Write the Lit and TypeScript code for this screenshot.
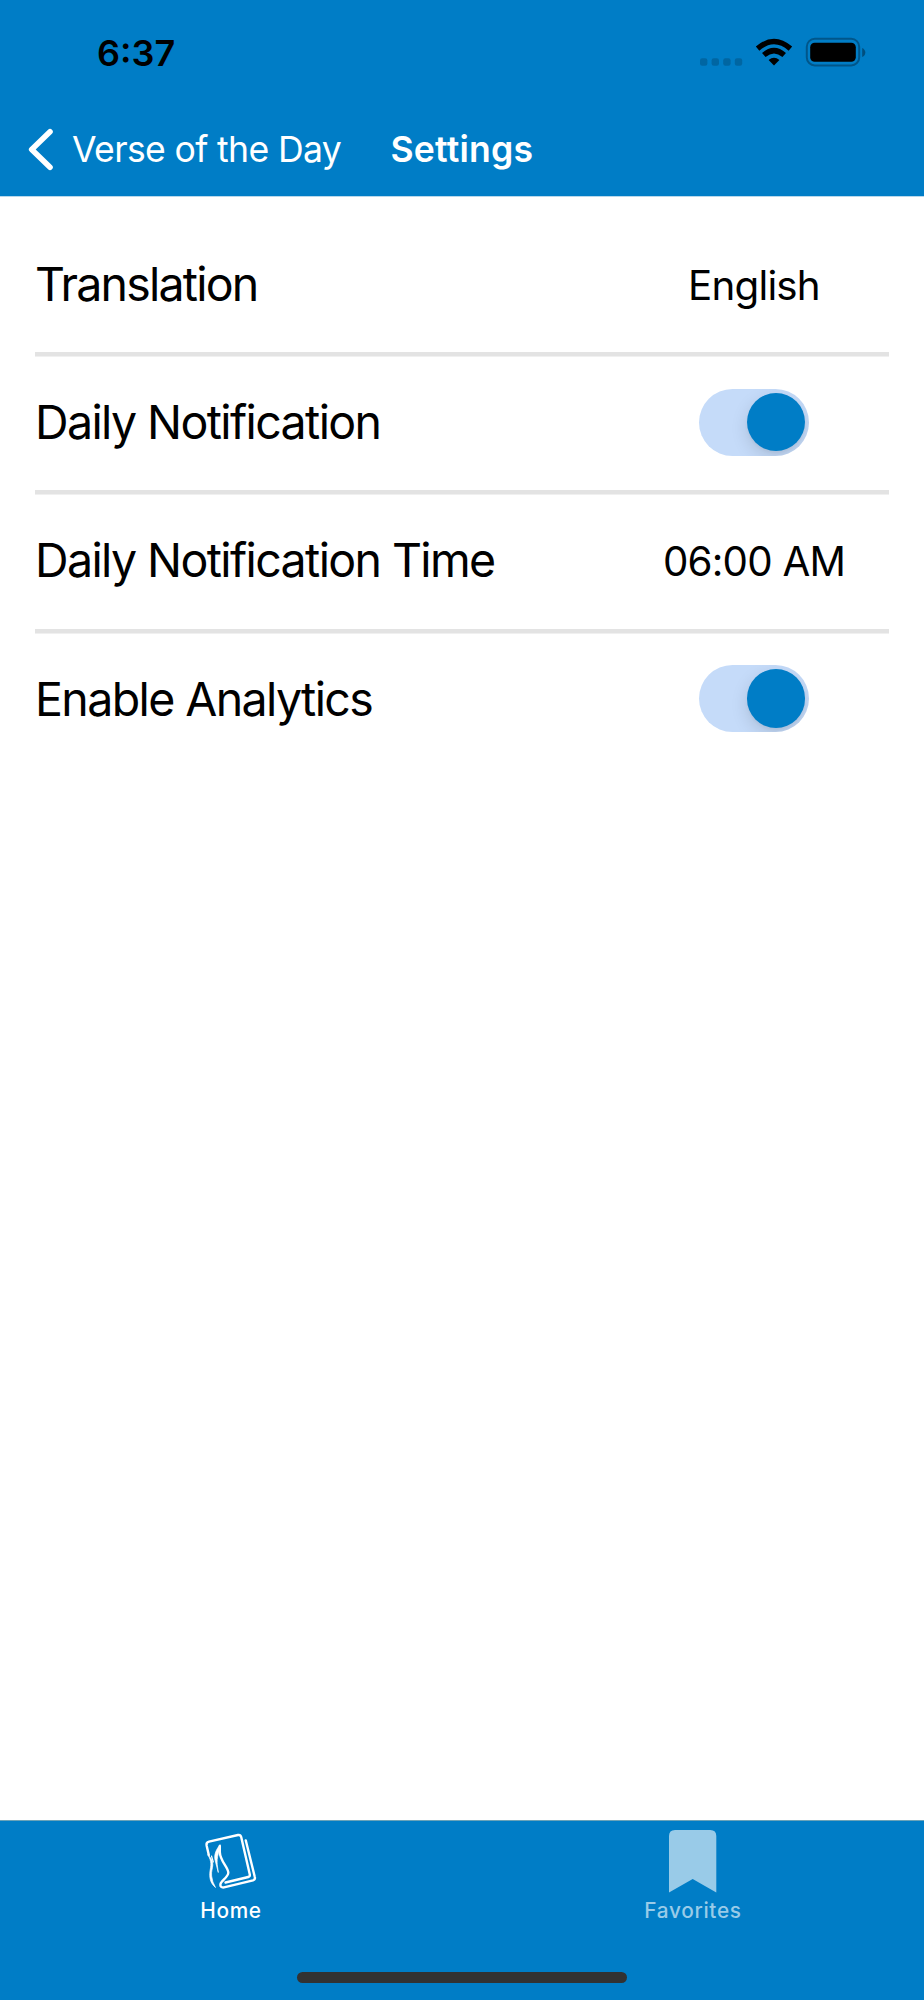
import { LitElement, html, css, svg } from "lit";
import { customElement } from "lit/decorators.js";

@customElement("toggle-switch")
class ToggleSwitch extends LitElement {
  static styles = css`
    :host { display: block; padding-top: 0.6px; }
    .track { box-sizing: border-box; width: 110px; height: 67px; border-radius: 34px; background: #c5dbf9; padding: 4px; display: flex; justify-content: flex-end; overflow: hidden; }
    .thumb { width: 58.5px; height: 58.5px; border-radius: 50%; background: #007dc6; box-shadow: 0 6px 17px rgba(0, 0, 0, 0.13), 0 2px 3px rgba(0, 0, 0, 0.04); }
  `;
  render() {
    return html`<div class="track"><div class="thumb"></div></div>`;
  }
}

@customElement("settings-row")
class SettingsRow extends LitElement {
  static styles = css`
    :host { display: flex; align-items: center; height: 138.2px; box-sizing: border-box; padding-bottom: 2.2px; border-bottom: 4px solid #e3e3e3; box-shadow: 0 1px #f0f0f0; }
    :host(:last-child) { border-bottom-color: transparent; box-shadow: none; }
    .label { flex: 1; font-size: 46.5px; line-height: 56px; letter-spacing: -1.61px; white-space: nowrap; }
    .value { width: 270px; display: flex; justify-content: center; }
  `;
  render() {
    return html`<div class="label"><slot name="label"></slot></div><div class="value"><slot></slot></div>`;
  }
}

@customElement("app-root")
class AppRoot extends LitElement {
  static styles = css`
    :host { display: flex; flex-direction: column; width: 924px; height: 2000px; background: #fff; color: #000; font-family: Inter, "Liberation Sans", sans-serif; overflow: hidden; }
    svg { display: block; }
    span { white-space: nowrap; }
    .top { height: 197px; box-sizing: border-box; background: #007dc6; border-bottom: 1px solid #b7d8ec; }
    .status { display: flex; justify-content: space-between; height: 104px; }
    .time { padding: 31px 0 0 97px; font-size: 36px; line-height: 44px; font-weight: 600; }
    .nav { display: flex; align-items: center; color: #fff; height: 91px; font-size: 35.6px; line-height: 44px; }
    .chev { margin-left: 28px; }
    .back { margin-left: 18px; width: 300px; letter-spacing: -0.65px; }
    .title { font-weight: 600; margin-left: 18.5px; letter-spacing: 0.2px; }
    .rows { flex: 1; padding: 21px 35px 0; }
    .tight { letter-spacing: -1.8px; }
    .val { font-size: 40.3px; line-height: 50px; padding-top: 4px; letter-spacing: -0.8px; }
    .tabs { height: 180px; box-sizing: border-box; background: #007dc6; border-top: 1px solid #6ba3b8; display: grid; grid-template-columns: 1fr 1fr; grid-template-rows: 151px 1fr; }
    .tab { display: flex; flex-direction: column; align-items: center; color: #fff; font-size: 20.8px; line-height: 28px; font-weight: 500; }
    .tab.off { color: #99cbe8; }
    .bar { grid-column: 1 / 3; justify-self: center; width: 330px; height: 11px; border-radius: 6px; background: #323232; }
    .s-home { letter-spacing: 0.7px; }
    .s-fav { letter-spacing: 0.7px; }
  `;
  render() {
    return html`
      <header class="top">
        <div class="status">
          <span class="time">6:37</span>
          <svg width="244" height="104" viewBox="680 0 244 104">
            <g fill="#0066a2">
              ${[700, 711.6, 723.2, 734.8].map((x) => svg`<rect x=${x} y="58.2" width="7.4" height="7.6" rx="2.2"/>`)}
            </g>
            <path d="M774 65.6L768.6 60.1Q774 55.2 779.4 60.1Z"/>
            <g fill="none" stroke="#000" stroke-width="5.4">
              <path d="M757.6 48.6Q774 34.4 790.4 48.6"/>
              <path d="M763.8 55Q774 46.2 784.2 55"/>
            </g>
            <rect x="806.8" y="38.8" width="52.4" height="26.6" rx="8" fill="none" stroke="#00568a" stroke-width="2"/>
            <rect x="810.2" y="42.8" width="45.6" height="19" rx="4.5"/>
            <path d="M862.2 48Q865.3 49.5 865.3 52.5T862.2 57Z" fill="#004f7e"/>
          </svg>
        </div>
        <nav class="nav">
          <svg class="chev" width="26" height="44" viewBox="0 0 26 44"><path d="M22 3.700L3.700 21.400 22 39.200" fill="none" stroke="#fff" stroke-width="5.600" stroke-linecap="round" stroke-linejoin="round"/></svg>
          <span class="back">Verse of the Day</span>
          <span class="title">Settings</span>
        </nav>
      </header>
      <main class="rows">
        <settings-row><span slot="label" class="tight">Translation</span><span class="val">English</span></settings-row>
        <settings-row><span slot="label">Daily Notification</span><toggle-switch></toggle-switch></settings-row>
        <settings-row><span slot="label">Daily Notification Time</span><span class="val">06:00 AM</span></settings-row>
        <settings-row><span slot="label">Enable Analytics</span><toggle-switch></toggle-switch></settings-row>
      </main>
      <footer class="tabs">
        <div class="tab">
          <svg width="60" height="76" viewBox="201 1821 60 76" fill="none" stroke="#fff" stroke-width="2.4" stroke-linecap="round" stroke-linejoin="round">
            <path d="M208.800 1855L206.600 1845.500Q206 1842.500 209 1841.700L238 1835Q240.500 1834.500 241.200 1837L249.800 1874.500Q250.200 1876.500 248.300 1877L225.500 1882.500"/>
            <path d="M245.800 1840.500L254.800 1877Q255.500 1879.500 253 1880.300L224 1887.400Q219.800 1887.800 220.500 1884C221 1881 228.500 1877 228.300 1872.500C228 1867 220 1861 219.800 1852V1846"/>
            <path d="M219.800 1845C215.500 1850.500 213.700 1855.500 215.300 1861Q216.800 1867 218.300 1872.500C217.500 1865 215.500 1860 219.600 1850Z" fill="#fff" stroke-width="0.700"/>
            <path d="M208 1855C211 1858 213 1860 212.800 1865C212.500 1869 211.200 1871 211.600 1876Q212.200 1882 215.500 1887.500C210 1883 209.200 1877 210 1871C210.800 1866 212.200 1862 208 1855Z" fill="#fff" stroke-width="0.700"/>
            <path d="M211.500 1856L213.300 1862" stroke-width="1.200"/>
          </svg>
          <span class="s-home">Home</span>
        </div>
        <div class="tab off">
          <svg width="48" height="76" viewBox="669 1821 48 76"><path d="M669 1892.500V1836Q669 1830 675 1830H710.300Q716.300 1830 716.300 1836V1892.500L692.700 1879Z" fill="#99cbe8"/></svg>
          <span class="s-fav">Favorites</span>
        </div>
        <div class="bar"></div>
      </footer>
    `;
  }
}
